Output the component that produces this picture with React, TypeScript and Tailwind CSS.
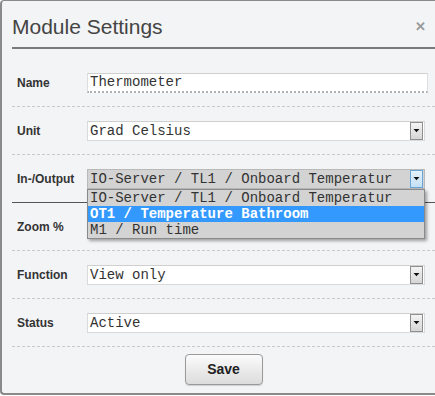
import React from 'react';

const mono = { fontFamily: '"Liberation Mono", "Courier New", monospace' };

// Petite flèche du menu déroulant
const Arrow = ({ active }: { active?: boolean }) => (
  <div
    className={
      active
        ? 'flex h-[18px] w-[13px] items-center justify-center border border-[#6aa7d8] bg-gradient-to-b from-[#e3f1fb] to-[#c4e0f5]'
        : 'flex h-[18px] w-[13px] items-center justify-center border border-[#8f8f8f] bg-gradient-to-b from-[#f4f4f4] to-[#d6d6d6]'
    }
  >
    <svg width="7" height="5" viewBox="0 0 7 5">
      <path d="M0.5 1 L6.5 1 L3.5 4.2 Z" fill="#111" />
    </svg>
  </div>
);

const Select = ({ value, active }: { value: string; active?: boolean }) => (
  <div
    className={
      active
        ? 'flex h-[20px] w-[338px] items-center justify-between border border-[#b9b9b9] bg-[#d3d3d3] pl-[2px] pr-[1px]'
        : 'flex h-[20px] w-[338px] items-center justify-between border border-[#dadada] border-t-[#cfcfcf] bg-white pl-[2px] pr-[1px]'
    }
  >
    <span className="whitespace-nowrap text-[14px] leading-none text-[#333]" style={mono}>
      {value}
    </span>
    <Arrow active={active} />
  </div>
);

const Row = ({
  label,
  children,
  solid,
}: {
  label: string;
  children?: React.ReactNode;
  solid?: boolean;
}) => (
  <div
    className={
      solid
        ? 'relative flex h-[48px] items-center border-b border-[#555]'
        : 'relative flex h-[48px] items-center border-b border-dashed border-[#c9c9c9]'
    }
  >
    <div className="w-[75px] pl-[5px] text-[12px] font-bold text-[#333]">{label}</div>
    {children}
  </div>
);

export default function App() {
  const options = [
    'IO-Server / TL1 / Onboard Temperatur',
    'OT1 / Temperature Bathroom',
    'M1 / Run time',
  ];
  return (
    <div
      className="h-[395px] w-[440px] overflow-hidden rounded-[4px] border-2 border-r-0 border-t border-[#8a8a8a] bg-[#f3f4f6]"
      style={{ fontFamily: '"Liberation Sans", Arial, sans-serif' }}
    >
      {/* En-tête */}
      <div className="mr-[5px] ml-[10px] flex h-[48px] items-center justify-between border-b-2 border-[#7a7a7a] pt-[5px]">
        <div className="text-[21px] text-[#444]">Module Settings</div>
        <div className="mr-[9px] text-[13px] font-bold leading-none text-[#9a9a9a]">✕</div>
      </div>

      <div className="mr-[5px] ml-[10px] pt-[10px]">
        <Row label="Name">
          <div className="flex h-[20px] w-[341px] items-center border border-[#dedede] border-t-[#cfcfcf] border-b-2 border-b-[#b0b0b0] bg-white pl-[2px] [border-bottom-style:dotted]">
            <span className="text-[14px] leading-none text-[#333]" style={mono}>
              Thermometer
            </span>
          </div>
        </Row>
        <Row label="Unit">
          <Select value="Grad Celsius" />
        </Row>
        <Row label="In-/Output" solid>
          <Select value={options[0]} active />
          {/* Liste déroulante ouverte */}
          <div className="absolute top-[34px] left-[75px] z-10 w-[338px] border border-[#8a8a8a] bg-[#d3d3d3] shadow-[2px_2px_3px_rgba(0,0,0,0.35)]">
            {options.map((o, i) => (
              <div
                key={o}
                className={
                  i === 1
                    ? 'flex h-[16px] items-center bg-[#3399ff] pl-[2px] text-[14px] font-bold leading-none text-white'
                    : 'flex h-[16px] items-center pl-[2px] text-[14px] leading-none text-[#333]'
                }
                style={mono}
              >
                {o}
              </div>
            ))}
          </div>
        </Row>
        <Row label="Zoom %" />
        <Row label="Function">
          <Select value="View only" />
        </Row>
        <Row label="Status">
          <Select value="Active" />
        </Row>
        <div className="flex justify-center pt-[7px]">
          <button className="h-[31px] w-[78px] rounded-[4px] border border-[#9a9a9a] bg-gradient-to-b from-[#fbfbfb] to-[#dcdcdc] text-[14px] font-bold text-[#222] shadow-[0_1px_1px_rgba(0,0,0,0.15)]">
            Save
          </button>
        </div>
      </div>
    </div>
  );
}
